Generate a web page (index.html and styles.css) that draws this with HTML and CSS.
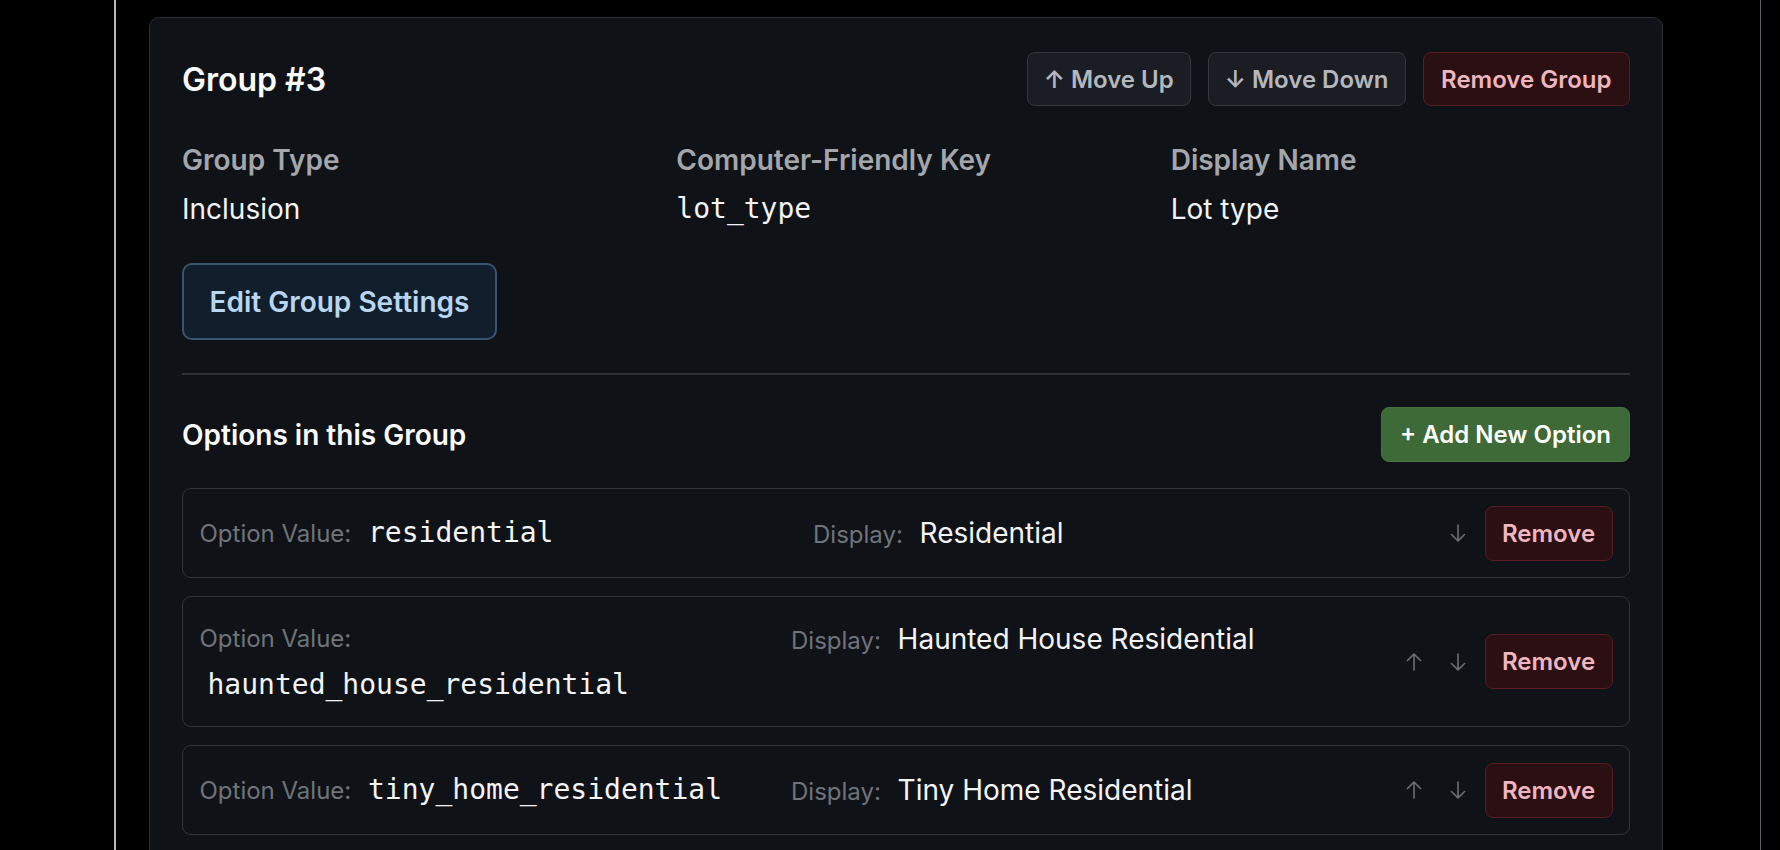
FILE: index.html
```html
<!DOCTYPE html>
<html lang="en">
<head>
<meta charset="utf-8">
<title>Group #3</title>
<link rel="stylesheet" href="styles.css">
</head>
<body>
<div class="frame">
  <section class="group-card">
    <header class="group-head">
      <h2 class="group-title">Group #3</h2>
      <div class="group-actions">
        <button class="btn btn-neutral">↑ Move Up</button>
        <button class="btn btn-neutral">↓ Move Down</button>
        <button class="btn btn-danger">Remove Group</button>
      </div>
    </header>

    <div class="meta-grid">
      <div class="meta">
        <div class="meta-label">Group Type</div>
        <div class="meta-value">Inclusion</div>
      </div>
      <div class="meta">
        <div class="meta-label">Computer-Friendly Key</div>
        <div class="meta-value mono">lot_type</div>
      </div>
      <div class="meta">
        <div class="meta-label">Display Name</div>
        <div class="meta-value">Lot type</div>
      </div>
    </div>

    <button class="btn-edit">Edit Group Settings</button>

    <hr class="divider">

    <div class="options-head">
      <h3 class="options-title">Options in this Group</h3>
      <button class="btn-add">+ Add New Option</button>
    </div>

    <div class="option-list">
      <div class="option-row">
        <div class="option-fields">
          <div class="field"><span class="field-label">Option Value:</span> <span class="field-code">residential</span></div>
          <div class="field"><span class="field-label">Display:</span> <span class="field-text">Residential</span></div>
        </div>
        <div class="option-controls">
          <button class="arrow-btn" aria-label="Move down"><svg class="arrow" viewBox="0 0 16 18"><path d="M8 1V17M1.5 10.5L8 17L14.5 10.5"/></svg></button>
          <button class="btn-remove">Remove</button>
        </div>
      </div>

      <div class="option-row">
        <div class="option-fields">
          <div class="field"><span class="field-label">Option Value:</span> <span class="field-code">haunted_house_residential</span></div>
          <div class="field"><span class="field-label">Display:</span> <span class="field-text">Haunted House Residential</span></div>
        </div>
        <div class="option-controls">
          <button class="arrow-btn" aria-label="Move up"><svg class="arrow" viewBox="0 0 16 18"><path d="M8 17V1M1.5 7.5L8 1L14.5 7.5"/></svg></button>
          <button class="arrow-btn" aria-label="Move down"><svg class="arrow" viewBox="0 0 16 18"><path d="M8 1V17M1.5 10.5L8 17L14.5 10.5"/></svg></button>
          <button class="btn-remove">Remove</button>
        </div>
      </div>

      <div class="option-row">
        <div class="option-fields">
          <div class="field"><span class="field-label">Option Value:</span> <span class="field-code">tiny_home_residential</span></div>
          <div class="field"><span class="field-label">Display:</span> <span class="field-text">Tiny Home Residential</span></div>
        </div>
        <div class="option-controls">
          <button class="arrow-btn" aria-label="Move up"><svg class="arrow" viewBox="0 0 16 18"><path d="M8 17V1M1.5 7.5L8 1L14.5 7.5"/></svg></button>
          <button class="arrow-btn" aria-label="Move down"><svg class="arrow" viewBox="0 0 16 18"><path d="M8 1V17M1.5 10.5L8 17L14.5 10.5"/></svg></button>
          <button class="btn-remove">Remove</button>
        </div>
      </div>
    </div>
  </section>
</div>
</body>
</html>
```

FILE: styles.css
```css
* { box-sizing: border-box; }

html, body {
  margin: 0;
  height: 850px;
  overflow: hidden;
  background: #000;
}

body {
  font-family: Inter, "Noto Sans", "Liberation Sans", sans-serif;
  color: #f2f3f4;
}

.frame {
  margin-left: 114px;
  width: 1647px;
  height: 850px;
  border-left: 2px solid #b9b9b9;
  border-right: 1px solid #5c5f64;
  padding: 17px 0 0 33px;
}

.group-card {
  width: 1514px;
  background: #0f1217;
  border: 1px solid #2b2f36;
  border-radius: 10px;
  padding: 34px 32px 32px;
}

.group-head {
  display: flex;
  align-items: center;
  justify-content: space-between;
}

.group-title {
  margin: 0;
  font-size: 32px;
  line-height: 47px;
  font-weight: 600;
  color: #fafafa;
}

.group-actions {
  display: flex;
  gap: 17px;
}

.btn {
  font-family: inherit;
  height: 54px;
  padding: 0 17.5px;
  border-radius: 8px;
  font-size: 24px;
  font-weight: 600;
  line-height: 35px;
  border: 1px solid;
}

.btn-neutral {
  padding: 0 16px;
  background: #1a1d23;
  border-color: #33373e;
  color: #b4b7bc;
}

.btn-danger {
  background: #2a1012;
  border-color: #561e20;
  color: #f0b6bf;
}

.meta-grid {
  margin-top: 33px;
  display: grid;
  grid-template-columns: repeat(3, 1fr);
  column-gap: 35px;
}

.meta-label {
  font-size: 28px;
  line-height: 42px;
  font-weight: 600;
  color: #a3a6ab;
  margin-bottom: 7px;
}

.meta-value {
  font-size: 28px;
  line-height: 42px;
  color: #f2f3f4;
}

.mono {
  font-family: "DejaVu Sans Mono", "Liberation Mono", monospace;
}

.btn-edit {
  display: block;
  margin-top: 33px;
  font-family: inherit;
  font-size: 28px;
  line-height: 42px;
  font-weight: 600;
  padding: 15.5px 25.5px;
  background: #111e2c;
  border: 2px solid #3a5470;
  border-radius: 10px;
  color: #b8d6f0;
}

.divider {
  margin: 33px 0 0;
  height: 2px;
  border: 0;
  background: #2e3238;
}

.options-head {
  margin-top: 32px;
  display: flex;
  align-items: center;
  justify-content: space-between;
}

.options-title {
  margin: 0;
  font-size: 28px;
  line-height: 42px;
  font-weight: 600;
  color: #fafafa;
}

.btn-add {
  font-family: inherit;
  height: 55px;
  padding: 0 18px;
  border: 1px solid #45743d;
  border-radius: 8px;
  background: #3d6a36;
  color: #fff;
  font-size: 24px;
  font-weight: 600;
}

.option-list {
  margin-top: 26px;
}

.option-row {
  display: flex;
  align-items: center;
  gap: 42px;
  border: 1px solid #30343b;
  border-radius: 9px;
  padding: 16.5px;
  margin-bottom: 18px;
}

.option-fields {
  flex: 1;
  min-width: 0;
  display: grid;
  grid-template-columns: 1fr 1fr;
  column-gap: 28px;
  align-items: start;
}

.field {
  font-size: 24px;
  line-height: 46.5px;
  padding-top: 2px;
}

.field-label {
  color: #70747a;
  margin-right: 2px;
}

.field-code {
  margin-left: 8px;
  font-family: "DejaVu Sans Mono", "Liberation Mono", monospace;
  font-size: 28px;
  color: #f4f4f4;
}

.field-text {
  margin-left: 8px;
  font-size: 28px;
  color: #f4f4f4;
}

.option-controls {
  display: flex;
  align-items: center;
  gap: 9px;
}

.arrow-btn {
  width: 35px;
  height: 35px;
  padding: 0;
  border: 0;
  background: transparent;
  display: flex;
  align-items: center;
  justify-content: center;
}

.arrow {
  width: 16px;
  height: 18px;
  fill: none;
  stroke: #6c7076;
  stroke-width: 1.6;
  stroke-linecap: round;
  stroke-linejoin: round;
}

.btn-remove {
  font-family: inherit;
  width: 128px;
  height: 55px;
  padding: 0;
  border: 1px solid #561e20;
  border-radius: 8px;
  background: #2a1012;
  color: #f0b6bf;
  font-size: 24px;
  font-weight: 600;
}
```
